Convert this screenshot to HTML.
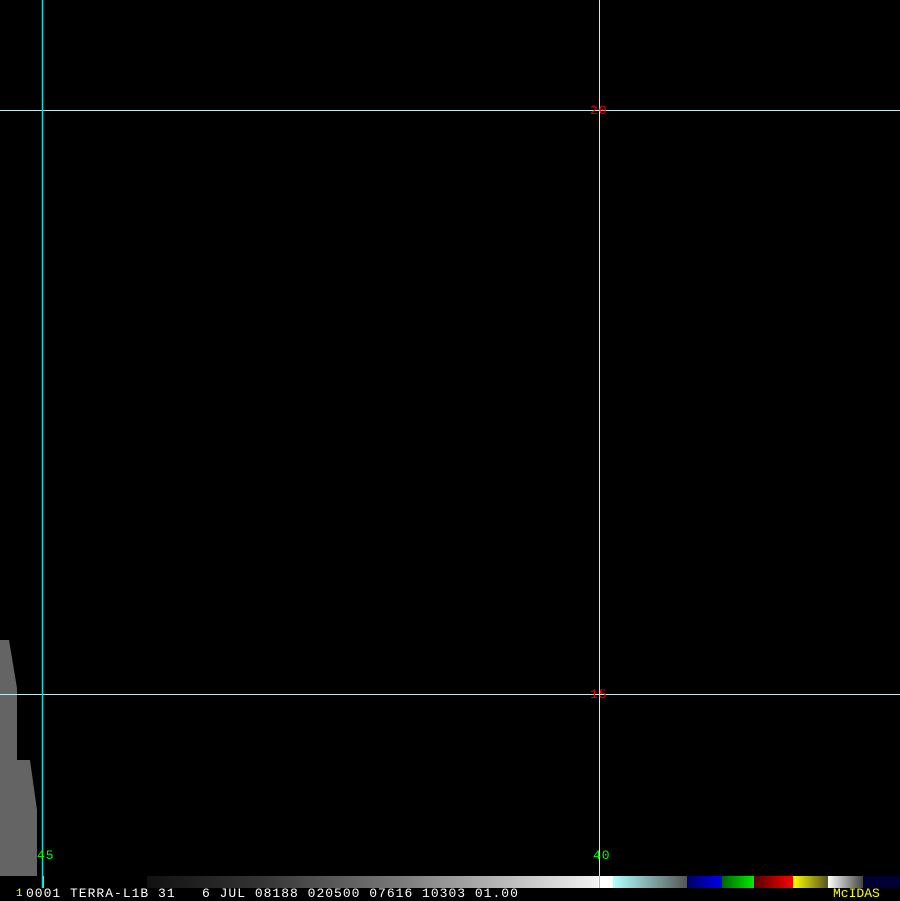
<!DOCTYPE html><html><head><style>
body{margin:0;width:900px;height:900px;background:#000;position:relative;overflow:hidden;font-family:"Liberation Mono",monospace}
div{position:absolute}
.t{font-size:13px;line-height:13px;letter-spacing:1px}
</style></head><body>
<svg width="900" height="900" style="position:absolute;left:0;top:0">
<polygon points="0,640 9,640 17,688 17,760 30,760 37,810 37,876 0,876" fill="#646464"/>
<line x1="0" y1="110.5" x2="900" y2="110.5" stroke="#c8e8e8" stroke-width="1"/>
<line x1="0" y1="694.5" x2="900" y2="694.5" stroke="#c8e8e8" stroke-width="1"/>
<line x1="599.5" y1="0" x2="599.5" y2="888" stroke="#d0e8e8" stroke-width="1"/>
<line x1="42.5" y1="0" x2="42.5" y2="888" stroke="#00e0e0" stroke-width="1.5"/>
</svg>
<div style="left:147px;top:876px;width:451px;height:12px;background:linear-gradient(90deg,#111,#333 25%,#777 55%,#f2f2f2)"></div>
<div style="left:598px;top:876px;width:15px;height:12px;background:#fff"></div>
<div style="left:613px;top:876px;width:74px;height:12px;background:linear-gradient(90deg,#afffff,#555)"></div>
<div style="left:687px;top:876px;width:35px;height:12px;background:linear-gradient(90deg,#000066,#0000ee)"></div>
<div style="left:722px;top:876px;width:32px;height:12px;background:linear-gradient(90deg,#006600,#00ee00)"></div>
<div style="left:754px;top:876px;width:39px;height:12px;background:linear-gradient(90deg,#550000,#ff0000)"></div>
<div style="left:793px;top:876px;width:35px;height:12px;background:linear-gradient(90deg,#ffff00,#555522)"></div>
<div style="left:828px;top:876px;width:35px;height:12px;background:linear-gradient(90deg,#fff,#444)"></div>
<div style="left:863px;top:876px;width:37px;height:12px;background:#000033"></div>
<div style="left:42.5px;top:876px;width:1.5px;height:12px;background:#0ff"></div>
<div style="left:599px;top:876px;width:1px;height:12px;background:#0ff"></div>
<div class="t" style="left:590px;top:104px;color:#e00">20</div>
<div class="t" style="left:590px;top:688px;color:#e00">15</div>
<div class="t" style="left:37px;top:849px;color:#0f0">45</div>
<div class="t" style="left:593px;top:849px;color:#0f0">40</div>
<div class="t" style="left:16px;top:888px;color:#ff0;font-size:11px">1</div>
<div class="t" style="left:26px;top:887px;color:#fff;white-space:pre;letter-spacing:1px;font-size:13px">0001 TERRA-L1B 31   6 JUL 08188 020500 07616 10303 01.00</div>
<div class="t" style="left:833px;top:887px;color:#ff0;font-size:13px;letter-spacing:0px">McIDAS</div>
</body></html>
